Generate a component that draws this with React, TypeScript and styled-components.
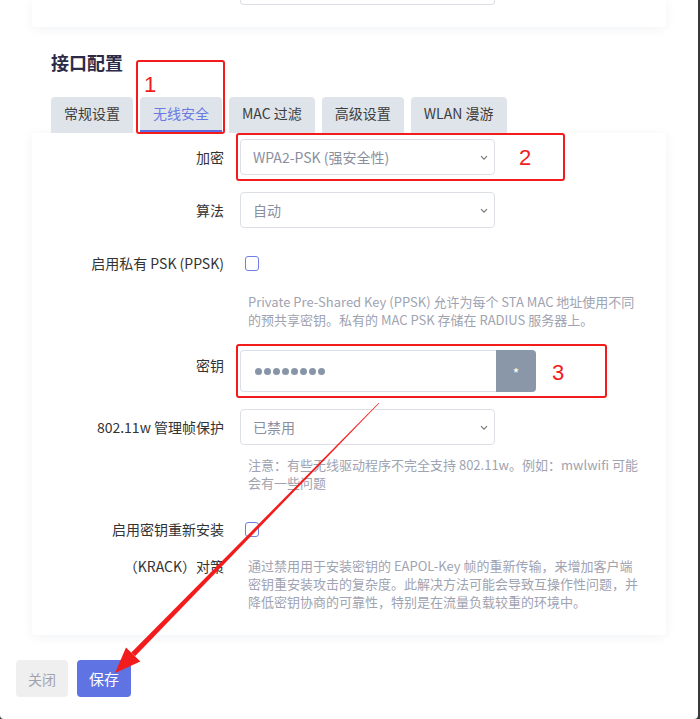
import styled, { createGlobalStyle } from "styled-components";

const GlobalStyle = createGlobalStyle`
  html, body {
    margin: 0;
    padding: 0;
    background: #3a3a3a;
  }
  body {
    font-family: "Noto Sans CJK SC", "Noto Sans", sans-serif;
  }
`;

const Modal = styled.div`
  position: relative;
  width: 698px;
  height: 719px;
  background: #fff;
  border-radius: 0 0 4px 4px;
  overflow: hidden;
`;

const Content = styled.div`
  padding: 0 32px;
`;

const TopCard = styled.div`
  height: 27px;
  box-sizing: border-box;
  padding-left: 208px;
  background: #fff;
  border-radius: 0 0 4px 4px;
  box-shadow: 0 2px 12px rgba(40, 50, 90, 0.06);
`;

const Stub = styled.div`
  width: 255px;
  height: 5px;
  box-sizing: border-box;
  border: 1px solid #dcdfe6;
  border-top: none;
  border-radius: 0 0 4px 4px;
`;

const Section = styled.div`
  padding-left: 19px;
`;

const Title = styled.h2`
  margin: 23px 0 23px;
  font-size: 18px;
  line-height: 24px;
  font-weight: 700;
  color: #2c2b47;
`;

const Tabs = styled.div`
  display: flex;
  gap: 7px;
`;

const Tab = styled.div<{ $active?: boolean }>`
  height: 36px;
  box-sizing: border-box;
  padding: 0 13px;
  line-height: 33px;
  font-size: 14px;
  background: #dfe4ea;
  border-radius: 4px 4px 0 0;
  border-bottom: 3px solid ${(p) => (p.$active ? "#5b6be0" : "transparent")};
  color: ${(p) => (p.$active ? "#6a7ae3" : "#3d3d3d")};
`;

const Card = styled.div`
  background: #fff;
  border-radius: 0 0 4px 4px;
  box-shadow: 0 2px 12px rgba(40, 50, 90, 0.06);
  padding: 6px 0 24px;
`;

const Field = styled.div<{ $gap?: number }>`
  display: grid;
  grid-template-columns: 192px 1fr;
  column-gap: 16px;
  margin-top: ${(p) => p.$gap ?? 17}px;
`;

const Label = styled.div<{ $h?: number }>`
  text-align: right;
  font-size: 14px;
  line-height: ${(p) => p.$h ?? 36}px;
  color: #333;
  white-space: nowrap;
`;

const Control = styled.div`
  display: flex;
  flex-direction: column;
  align-items: flex-start;
`;

const SelectBox = styled.div`
  position: relative;
  width: 255px;
  height: 36px;
  box-sizing: border-box;
  border: 1px solid #dcdfe6;
  border-radius: 4px;
  padding-left: 12px;
  display: flex;
  align-items: center;
  font-size: 14px;
  color: #8a8fa0;
`;

const Chevron = styled.svg`
  position: absolute;
  right: 6px;
  top: 15px;
`;

const KeyGroup = styled.div`
  display: flex;
  height: 42px;
`;

const KeyInput = styled.div`
  width: 256px;
  box-sizing: border-box;
  border: 1px solid #dcdfe6;
  border-right: none;
  border-radius: 4px 0 0 4px;
  padding-left: 14px;
  display: flex;
  align-items: center;
  gap: 2px;
`;

const Dot = styled.span`
  width: 7px;
  height: 7px;
  border-radius: 50%;
  background: #8895a8;
`;

const RevealButton = styled.div`
  width: 40px;
  background: #8a97a9;
  border-radius: 0 4px 4px 0;
  color: #fff;
  font-size: 14px;
  display: flex;
  align-items: center;
  justify-content: center;
  padding-top: 4px;
  box-sizing: border-box;
`;

const CheckRow = styled.div`
  height: 36px;
  display: flex;
  align-items: center;
  padding-left: 5px;
`;

const Checkbox = styled.span`
  width: 14px;
  height: 15px;
  box-sizing: border-box;
  border: 1.5px solid #6f7fe2;
  border-radius: 3px;
`;

const Help = styled.div<{ $gap?: number; $lh?: number }>`
  margin-top: ${(p) => p.$gap ?? 0}px;
  padding-left: 8px;
  font-size: 13px;
  line-height: ${(p) => p.$lh ?? 17.5}px;
  color: #a0a3b1;
  white-space: nowrap;
`;

const Footer = styled.div`
  display: flex;
  gap: 9px;
  padding: 25px 0 0 16px;
`;

const Button = styled.button<{ $primary?: boolean }>`
  height: 37px;
  padding: 0 12px;
  border: none;
  border-radius: 4px;
  font-family: inherit;
  font-size: ${(p) => (p.$primary ? 15 : 14)}px;
  background: ${(p) => (p.$primary ? "#6073e3" : "#efefef")};
  color: ${(p) => (p.$primary ? "#fff" : "#a0a4b0")};
`;

const Mark = styled.div<{ $x: number; $y: number; $w: number; $h: number }>`
  position: absolute;
  left: ${(p) => p.$x}px;
  top: ${(p) => p.$y}px;
  width: ${(p) => p.$w}px;
  height: ${(p) => p.$h}px;
  box-sizing: border-box;
  border: 2.5px solid #f21c1c;
  border-radius: 3px;
  pointer-events: none;
`;

const MarkNumber = styled.span<{ $x: number; $y: number }>`
  position: absolute;
  left: ${(p) => p.$x}px;
  top: ${(p) => p.$y}px;
  font-family: "Liberation Sans", Arial, sans-serif;
  font-size: 22px;
  line-height: 26px;
  color: #f21c1c;
`;

const Overlay = styled.svg`
  position: absolute;
  left: 0;
  top: 0;
  pointer-events: none;
`;

const Select = ({ value }: { value: string }) => (
  <SelectBox>
    {value}
    <Chevron width="8" height="6" viewBox="0 0 8 6">
      <path d="M1 1.2l3 3 3-3" fill="none" stroke="#777" strokeWidth="1.2" />
    </Chevron>
  </SelectBox>
);

const Arrow = () => {
  const s = [379, 403];
  const t = [115, 673];
  const dx = t[0] - s[0];
  const dy = t[1] - s[1];
  const len = Math.hypot(dx, dy);
  const u = [dx / len, dy / len];
  const n = [-u[1], u[0]];
  const b = [t[0] - u[0] * 26, t[1] - u[1] * 26];
  const pt = (p: number[], k: number) => `${p[0] + n[0] * k},${p[1] + n[1] * k}`;
  const shaft = [pt(s, 0.3), pt(b, 2.6), pt(b, -2.6), pt(s, -0.3)].join(" ");
  const head = [pt(b, 10), `${t[0]},${t[1]}`, pt(b, -10)].join(" ");
  return (
    <Overlay width="698" height="719">
      <polygon points={shaft} fill="#f21c1c" />
      <polygon points={head} fill="#f21c1c" />
    </Overlay>
  );
};

const tabs = ["常规设置", "无线安全", "MAC 过滤", "高级设置", "WLAN 漫游"];

export default function App() {
  return (
    <>
      <GlobalStyle />
      <Modal>
        <Content>
          <TopCard>
            <Stub />
          </TopCard>
          <Section>
            <Title>接口配置</Title>
            <Tabs>
              {tabs.map((t) => (
                <Tab key={t} $active={t === "无线安全"}>
                  {t}
                </Tab>
              ))}
            </Tabs>
          </Section>
          <Card>
            <Field $gap={0}>
              <Label>加密</Label>
              <Control>
                <Select value="WPA2-PSK (强安全性)" />
              </Control>
            </Field>
            <Field>
              <Label>算法</Label>
              <Control>
                <Select value="自动" />
              </Control>
            </Field>
            <Field>
              <Label>启用私有 PSK (PPSK)</Label>
              <Control>
                <CheckRow>
                  <Checkbox />
                </CheckRow>
                <Help $gap={12}>
                  Private Pre-Shared Key (PPSK) 允许为每个 STA MAC 地址使用不同
                  <br />
                  的预共享密钥。私有的 MAC PSK 存储在 RADIUS 服务器上。
                </Help>
              </Control>
            </Field>
            <Field $gap={22}>
              <Label $h={30}>密钥</Label>
              <Control>
                <KeyGroup>
                  <KeyInput>
                    {Array.from({ length: 8 }).map((_, i) => (
                      <Dot key={i} />
                    ))}
                  </KeyInput>
                  <RevealButton>*</RevealButton>
                </KeyGroup>
              </Control>
            </Field>
            <Field>
              <Label>802.11w 管理帧保护</Label>
              <Control>
                <Select value="已禁用" />
                <Help $gap={11}>
                  注意：有些无线驱动程序不完全支持 802.11w。例如：mwlwifi 可能
                  <br />
                  会有一些问题
                </Help>
              </Control>
            </Field>
            <Field $gap={20}>
              <Label>启用密钥重新安装</Label>
              <Control>
                <CheckRow>
                  <Checkbox />
                </CheckRow>
              </Control>
            </Field>
            <Field $gap={10}>
              <Label $h={18}>（KRACK）对策</Label>
              <Control>
                <Help $lh={18}>
                  通过禁用用于安装密钥的 EAPOL-Key 帧的重新传输，来增加客户端
                  <br />
                  密钥重安装攻击的复杂度。此解决方法可能会导致互操作性问题，并
                  <br />
                  降低密钥协商的可靠性，特别是在流量负载较重的环境中。
                </Help>
              </Control>
            </Field>
          </Card>
        </Content>
        <Footer>
          <Button>关闭</Button>
          <Button $primary>保存</Button>
        </Footer>

        <Mark $x={136} $y={60} $w={89} $h={74}>
          <MarkNumber $x={6} $y={10}>1</MarkNumber>
        </Mark>
        <Mark $x={236} $y={133} $w={329} $h={48}>
          <MarkNumber $x={281} $y={10}>2</MarkNumber>
        </Mark>
        <Mark $x={236} $y={344} $w={371} $h={54}>
          <MarkNumber $x={314} $y={14}>3</MarkNumber>
        </Mark>
        <Arrow />
      </Modal>
    </>
  );
}
